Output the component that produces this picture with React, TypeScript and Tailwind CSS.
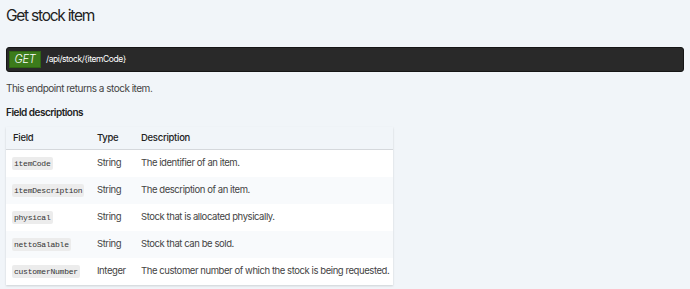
const fields = [
  { name: 'itemCode', type: 'String', desc: 'The identifier of an item.' },
  { name: 'itemDescription', type: 'String', desc: 'The description of an item.' },
  { name: 'physical', type: 'String', desc: 'Stock that is allocated physically.' },
  { name: 'nettoSalable', type: 'String', desc: 'Stock that can be sold.' },
  { name: 'customerNumber', type: 'Integer', desc: 'The customer number of which the stock is being requested.' },
]

export default function App() {
  return (
    <div className="w-[690px] h-[289px] bg-[#f1f5f9] px-[6px] pt-[7px] font-['Inter',sans-serif] text-[#3a3a3a] overflow-hidden">
      {/* Title */}
      <h1 className="text-[15.5px] leading-[18px] text-[#222] tracking-[-0.08em]">Get stock item</h1>

      {/* Endpoint bar */}
      <div className="mt-[22px] h-[25px] w-[678px] bg-[#292929] border border-[#161616] rounded-[3px] flex items-center pl-[2px] gap-[5px]">
        <span className="w-[32px] h-[17px] bg-[#3c7b1b] border border-[#2f6513] flex items-center justify-center text-white italic text-[11px] font-light tracking-[-0.02em]">
          GET
        </span>
        <span className="text-white text-[8.5px] tracking-[-0.05em]">/api/stock/{'{itemCode}'}</span>
      </div>

      {/* Description */}
      <p className="mt-[9px] text-[10px] leading-[14px] text-[#444] tracking-[-0.05em]">This endpoint returns a stock item.</p>

      <h2 className="mt-[10px] text-[10px] leading-[14px] font-semibold text-[#222] tracking-[-0.05em]">Field descriptions</h2>

      {/* Table */}
      <div className="mt-[8px] w-[387px] shadow-[0_1px_2px_rgba(0,0,0,0.15)]">
        <div className="flex h-[23px] items-center border-b border-[#d5d8dc] bg-[#f1f5f9] text-[9.5px] font-medium text-[#222] tracking-[-0.03em] whitespace-nowrap">
          <span className="w-[91px] shrink-0 pl-[7px]">Field</span>
          <span className="w-[44px] shrink-0">Type</span>
          <span>Description</span>
        </div>
        {fields.map((f, i) => (
          <div
            key={f.name}
            className={`flex h-[27px] items-center text-[9.5px] tracking-[-0.045em] whitespace-nowrap ${i % 2 === 1 ? 'bg-[#f8fafc]' : 'bg-white'}`}
          >
            <span className="w-[91px] shrink-0 pl-[6px]">
              <code className="bg-[#ececec] rounded-[2px] px-[2px] py-[2px] font-['Liberation_Mono',monospace] text-[8px] text-[#333] tracking-[-0.03em]">
                {f.name}
              </code>
            </span>
            <span className="w-[44px] shrink-0 text-[#444]">{f.type}</span>
            <span className="text-[#444]">{f.desc}</span>
          </div>
        ))}
      </div>
    </div>
  )
}
